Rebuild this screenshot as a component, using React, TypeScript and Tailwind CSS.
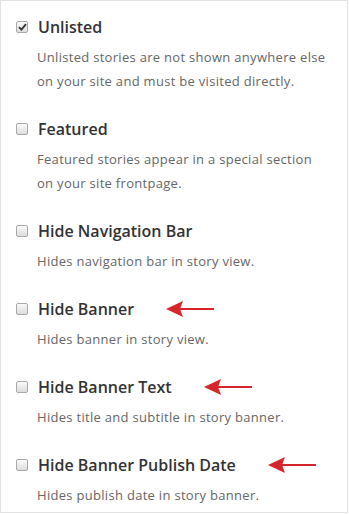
import React from "react";

type Option = {
  title: string;
  desc: string[];
  checked?: boolean;
  arrow?: boolean;
};

const options: Option[] = [
  {
    title: "Unlisted",
    desc: ["Unlisted stories are not shown anywhere else", "on your site and must be visited directly."],
    checked: true,
  },
  {
    title: "Featured",
    desc: ["Featured stories appear in a special section", "on your site frontpage."],
  },
  { title: "Hide Navigation Bar", desc: ["Hides navigation bar in story view."] },
  { title: "Hide Banner", desc: ["Hides banner in story view."], arrow: true },
  { title: "Hide Banner Text", desc: ["Hides title and subtitle in story banner."], arrow: true },
  { title: "Hide Banner Publish Date", desc: ["Hides publish date in story banner."], arrow: true },
];

function Checkbox({ checked }: { checked?: boolean }) {
  return (
    <span className="flex h-[12px] w-[12px] shrink-0 items-center justify-center rounded-[2px] border border-[#a9a9a9] bg-gradient-to-b from-[#fafafa] to-[#dcdcdc]">
      {checked && (
        <svg width="9" height="8" viewBox="0 0 9 8">
          <path d="M1 4.2 L3.4 6.6 L8 1.2" fill="none" stroke="#333" strokeWidth="1.8" />
        </svg>
      )}
    </span>
  );
}

function Arrow() {
  return (
    <svg width="48" height="16" viewBox="0 0 48 16" className="ml-[32px] shrink-0">
      <path d="M0 8 L17 0 L14 8 L17 16 Z" fill="#d7262b" />
      <rect x="12" y="7" width="36" height="2" fill="#d7262b" />
    </svg>
  );
}

export default function App() {
  return (
    <div
      className="h-[513px] w-[348px] border border-[#e2e2e2] bg-white pt-[14px]"
      style={{ fontFamily: '"Open Sans", "Noto Sans", sans-serif' }}
    >
      <div className="flex flex-col gap-[24px]">
        {options.map((o) => (
          <div key={o.title} className="flex flex-col">
            <div className="flex h-[24px] items-center">
              <span className="ml-[15px] mr-[10px]">
                <Checkbox checked={o.checked} />
              </span>
              <span className="text-[16px] leading-[24px] font-semibold text-[#333]">{o.title}</span>
              {o.arrow && <Arrow />}
            </div>
            <div className="mt-[6px] pl-[36px] text-[13px] leading-[24px] tracking-[0.3px] text-[#666]">
              {o.desc.map((d) => (
                <div key={d}>{d}</div>
              ))}
            </div>
          </div>
        ))}
      </div>
    </div>
  );
}
